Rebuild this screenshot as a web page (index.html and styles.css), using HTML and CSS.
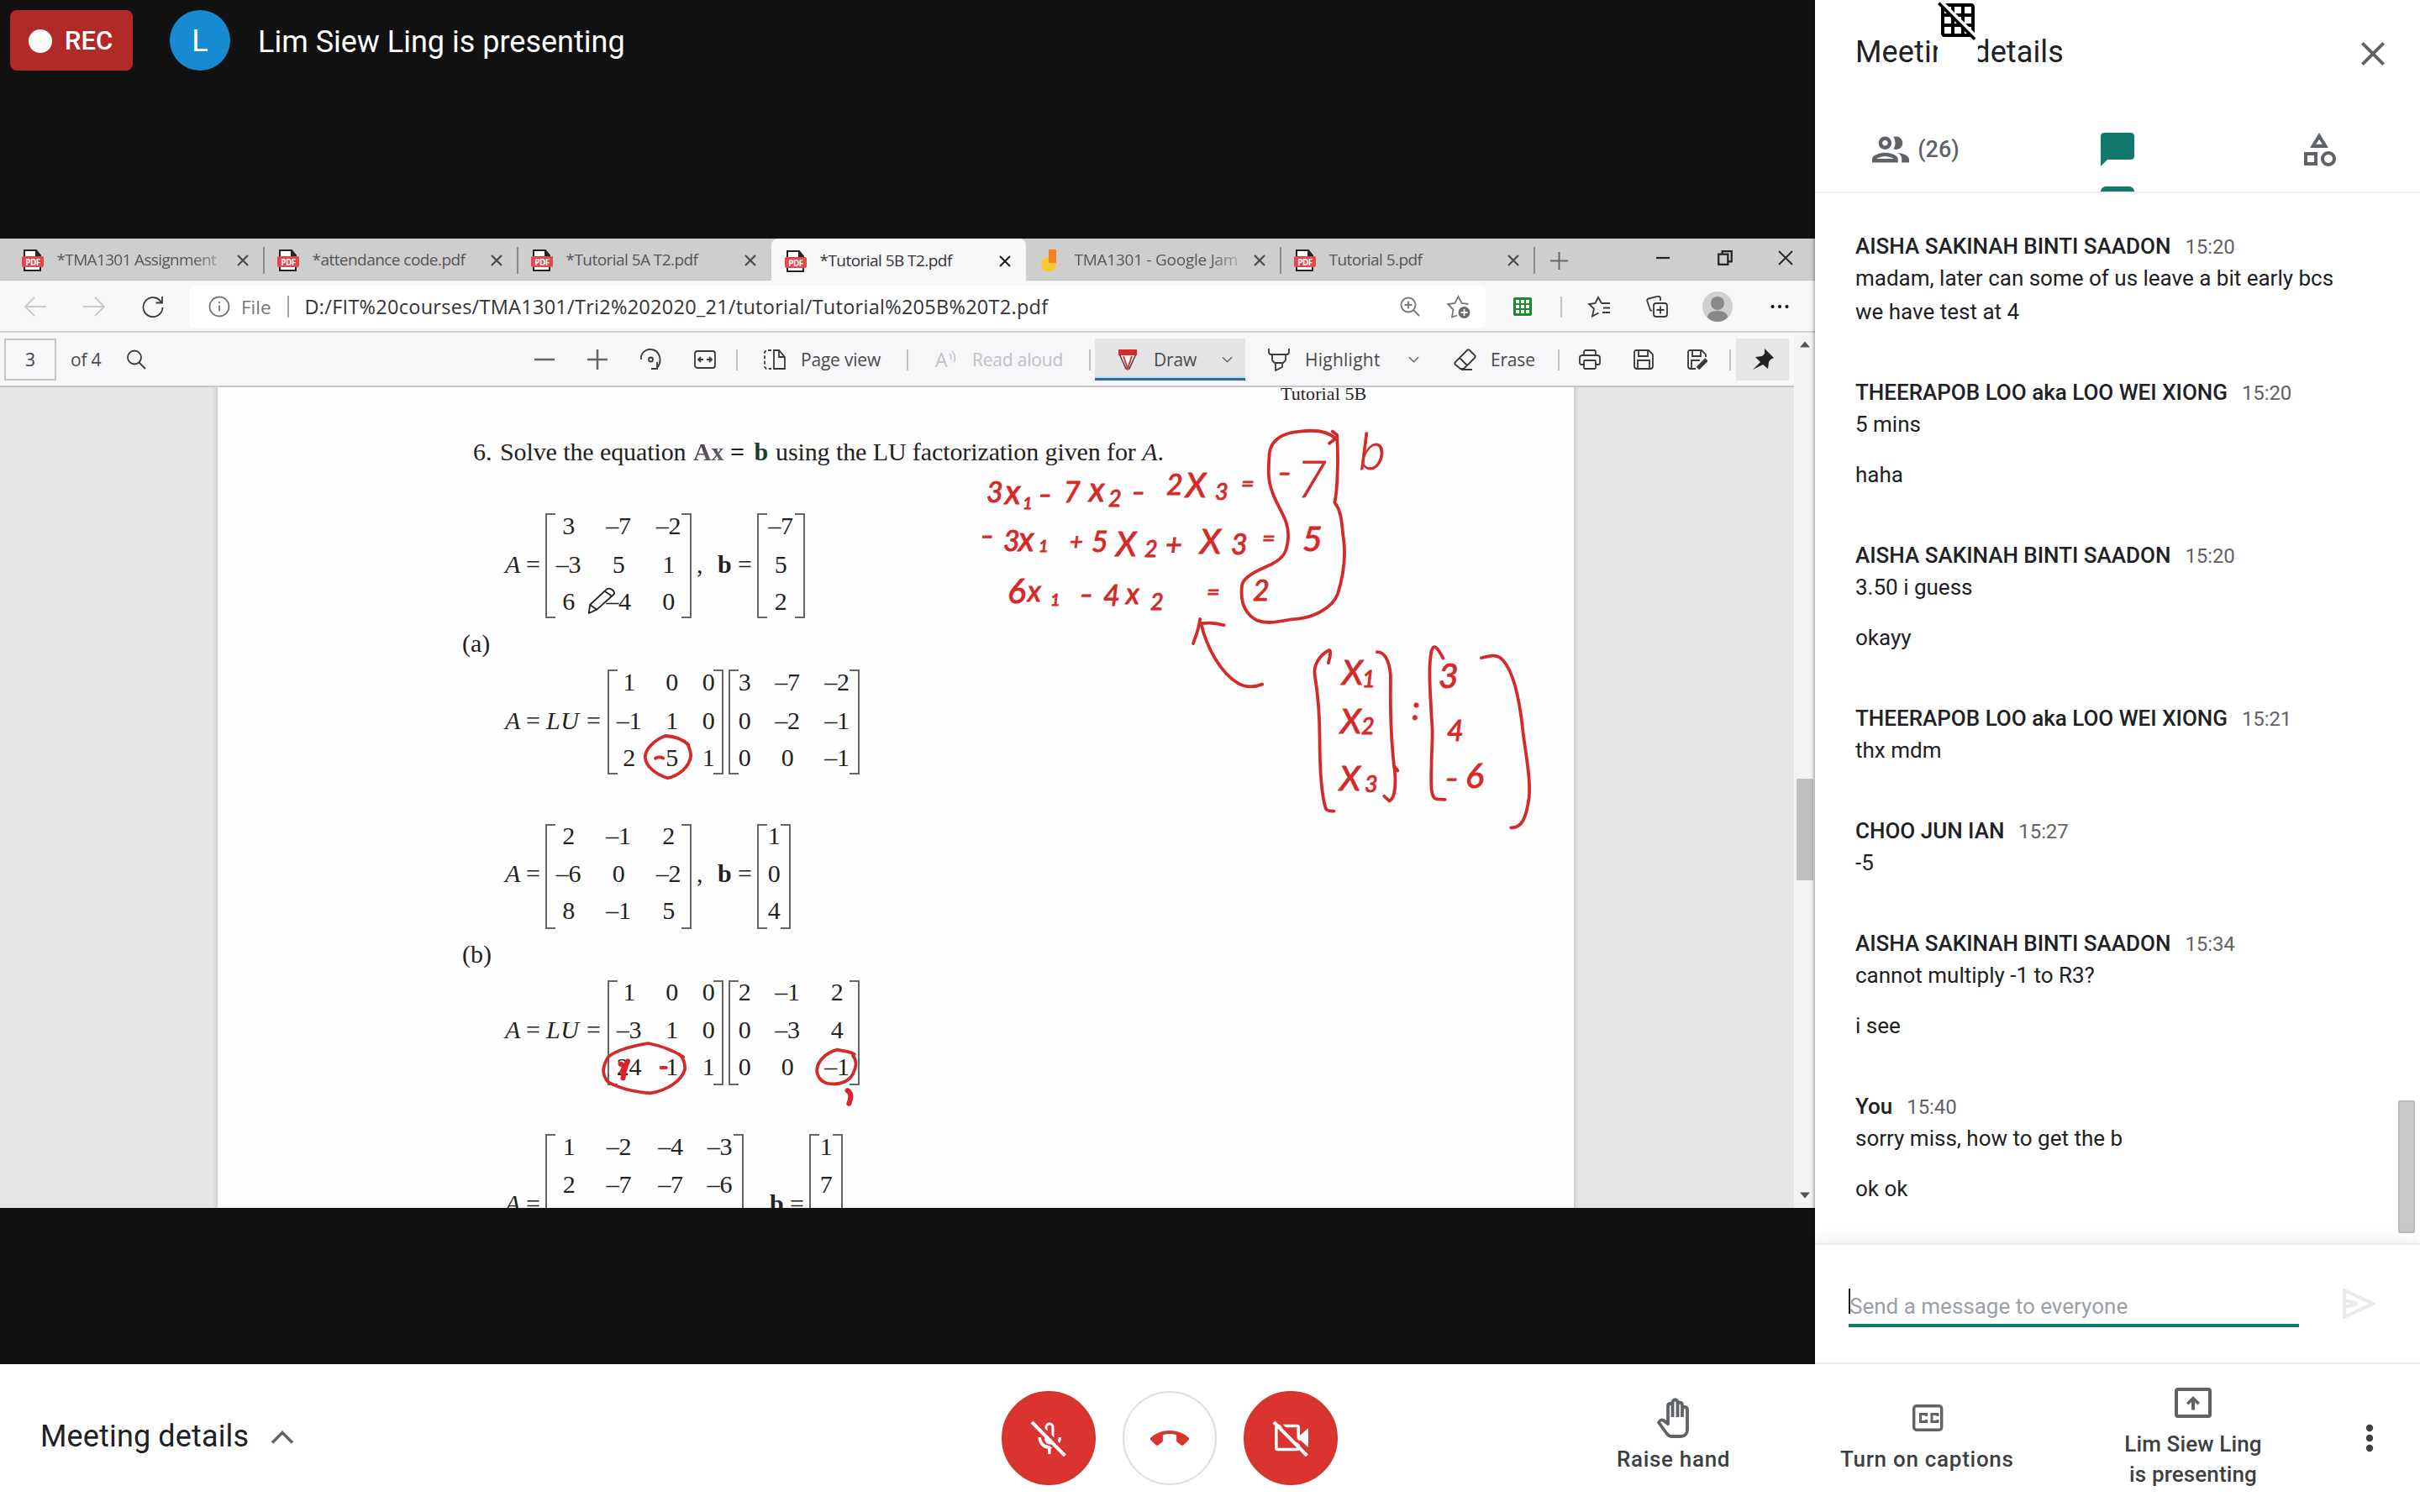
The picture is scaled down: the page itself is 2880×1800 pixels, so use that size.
FILE: index.html
```html
<!DOCTYPE html>
<html lang="en">
<head>
<meta charset="utf-8">
<title>Meeting</title>
<link rel="stylesheet" href="styles.css">
</head>
<body>
<svg class="defs" aria-hidden="true">
  <symbol id="pdf" viewBox="0 0 26 26">
    <path d="M3 1h14l5 6v18H3z" fill="#fff" stroke="#222" stroke-width="2"/>
    <path d="M16 1l6 7h-6z" fill="#222"/>
    <rect x="0" y="8" width="26" height="13" rx="2" fill="#e2474c"/>
    <text x="13" y="18.5" text-anchor="middle" class="pdf-label">PDF</text>
  </symbol>
  <symbol id="x" viewBox="0 0 16 16"><path d="M2 2l12 12M14 2L2 14" fill="none" stroke="currentColor" stroke-width="2.2"/></symbol>
  <symbol id="chev" viewBox="0 0 14 8"><path d="M1 1l6 6 6-6" fill="none" stroke="currentColor" stroke-width="1.6"/></symbol>
</svg>

<div class="app">
  <main class="stage">
    <header class="stage-head">
      <div class="rec"><i></i>REC</div>
      <div class="avatar">L</div>
      <div class="presenter">Lim Siew Ling is presenting</div>
    </header>

    <section class="share">
      <div class="tabs">
        <div class="tab"><svg class="fav"><use href="#pdf"/></svg><span class="fade tight">*TMA1301 Assignment</span><svg class="tx"><use href="#x"/></svg></div>
        <div class="tab"><svg class="fav"><use href="#pdf"/></svg><span>*attendance code.pdf</span><svg class="tx"><use href="#x"/></svg></div>
        <div class="tab last"><svg class="fav"><use href="#pdf"/></svg><span>*Tutorial 5A T2.pdf</span><svg class="tx"><use href="#x"/></svg></div>
        <div class="tab active"><svg class="fav"><use href="#pdf"/></svg><span>*Tutorial 5B T2.pdf</span><svg class="tx"><use href="#x"/></svg></div>
        <div class="tab"><svg class="fav jam" viewBox="0 0 26 26"><path d="M11 9h9v8a9 9 0 1 1-9-8z" fill="#fbc934"/><path d="M11 0h9v16h-9z" fill="#f5821f"/></svg><span class="fade">TMA1301 - Google Jam</span><svg class="tx"><use href="#x"/></svg></div>
        <div class="tab"><svg class="fav"><use href="#pdf"/></svg><span>Tutorial 5.pdf</span><svg class="tx"><use href="#x"/></svg></div>
        <div class="win">
          <svg class="w-plus" viewBox="0 0 22 22"><path d="M11 0v22M0 11h22" stroke="#666" stroke-width="2"/></svg>
          <svg class="w-min" viewBox="0 0 18 18"><path d="M1 9h16" stroke="#222" stroke-width="2.2"/></svg>
          <svg class="w-res" viewBox="0 0 18 18"><path d="M2 5h10v11H2zM6 5V2h10v11h-4" fill="none" stroke="#222" stroke-width="2"/></svg>
          <svg class="w-x" viewBox="0 0 18 18"><path d="M1 1l16 16M17 1L1 17" stroke="#222" stroke-width="1.800"/></svg>
        </div>
      </div>

      <div class="addr">
        <svg class="i26 dim" viewBox="0 0 26 26"><path d="M26 13H1M12 2L1 13l11 11" /></svg>
        <svg class="i26 dim" viewBox="0 0 26 26"><path d="M0 13h25M14 2l11 11-11 11"/></svg>
        <svg class="i26 dark" viewBox="0 0 26 26"><path d="M23 8A11.5 11.5 0 1 0 24.5 14M24 1v7.500h-7.500"/></svg>
        <div class="omni">
          <svg class="i26 grey" viewBox="0 0 26 26"><circle cx="13" cy="13" r="11.500"/><path d="M13 11.500v7M13 7v2"/></svg>
          <span class="file">File</span>
          <i></i>
          <span class="url">D:/FIT%20courses/TMA1301/Tri2%202020_21/tutorial/Tutorial%205B%20T2.pdf</span>
          <svg class="i24 grey" viewBox="0 0 24 24"><circle cx="10" cy="10" r="8.500"/><path d="M16.500 16.500L23 23M10 5.500v9M5.500 10h9"/></svg>
          <svg class="i28 grey" viewBox="0 0 28 28"><path d="M12 24.500l-6 2 1.500-9L1 11l8.500-1L13.500 2l4 8 8 1"/><circle cx="20.500" cy="21" r="7" fill="#6b6b6b" stroke="none"/><path d="M20.500 17v8M16.500 21h8" stroke="#fff"/></svg>
        </div>
        <svg class="i24" viewBox="0 0 24 24"><rect x="1" y="1" width="22" height="22" rx="2" fill="#1f8a2d"/><path d="M4 4h4v4H4zm6 0h4v4h-4zm6 0h4v4h-4zM4 10h4v4H4zm6 0h4v4h-4zm6 0h4v4h-4zM4 16h4v4H4zm6 0h4v4h-4zm6 0h4v4h-4z" fill="#fff"/></svg>
        <i class="sep"></i>
        <svg class="i26 dark" viewBox="0 0 26 26"><path d="M16 9l-4-7-3.500 7L1 10l6 5.500-2 9 7.500-4M16 9h10M18 14.500h8M17 20h9"/></svg>
        <svg class="i26 dark" viewBox="0 0 26 26"><rect x="9" y="9" width="16" height="16" rx="3"/><path d="M17 12.500v9M12.500 17h9M17 6V3c0-2-2-2.500-3.500-2L3 3.500C1 4 1 5 1.500 7L5 17c.5 1 1 1 2 .500"/></svg>
        <svg class="i36" viewBox="0 0 36 36"><circle cx="18" cy="18" r="18" fill="#d2d0cf"/><circle cx="18" cy="14" r="8" fill="#8b8988"/><path d="M6 31c0-5 5-8 12-8s12 3 12 8c-3 3-7 5-12 5s-9-2-12-5z" fill="#8b8988"/></svg>
        <svg class="i22" viewBox="0 0 22 22"><circle cx="2.500" cy="11" r="2" /><circle cx="11" cy="11" r="2"/><circle cx="19.500" cy="11" r="2"/></svg>
      </div>

      <div class="viewer">
        <div class="view-main">
          <div class="tools">
            <span class="pageno">3</span>
            <span class="t">of 4</span>
            <svg class="i24 dark" viewBox="0 0 24 24"><circle cx="10" cy="9.500" r="8"/><path d="M15.500 15.500L23 23"/></svg>
            <svg class="i24 mid" viewBox="0 0 24 24"><path d="M0 12h24"/></svg>
            <svg class="i24 mid" viewBox="0 0 24 24"><path d="M0 12h24M12 0v24"/></svg>
            <svg class="i26 dark" viewBox="0 0 26 26"><path d="M1 13C0 5 7 0 13 1c10 1 14 13 7 22M20 16v8h-7" /><circle cx="12.500" cy="13" r="2.500"/></svg>
            <svg class="i26 dark" viewBox="0 0 26 26"><rect x="1" y="3" width="24" height="20" rx="3"/><path d="M5 13h6M21 13h-6M8 10l-3 3 3 3M18 10l3 3-3 3"/></svg>
            <i class="sep"></i>
            <svg class="i26 dark" viewBox="0 0 26 26"><path d="M12 2v22h13V10l-7-8zM18 2v8h7"/><path d="M9 2H3L1 4v18l2 2h6" stroke-dasharray="4 2.500"/></svg>
            <span class="t">Page view</span>
            <i class="sep"></i>
            <span class="aloud">A<svg viewBox="0 0 10 16"><path d="M1 4c2 2 2 4 2 7M4 1c4 4 4 8 3 13"/></svg></span>
            <span class="t off">Read aloud</span>
            <i class="sep"></i>
            <div class="draw">
              <svg class="i26" viewBox="0 0 26 26"><path d="M3 6h20l-8 18h-4z" fill="#fff" stroke="#444" stroke-width="1.600"/><path d="M2 1h22v7H2z" fill="#d92a2a"/><path d="M8 9l5 15 5-15" fill="none" stroke="#d33" stroke-width="2"/></svg>
              <span class="t">Draw</span>
              <svg class="c13"><use href="#chev"/></svg>
            </div>
            <svg class="i28 dark" viewBox="0 0 28 28"><path d="M2 1v4c0 2 1 3 3 3h18c2 0 3-1 3-3V1M6 8v7l3 3h10l3-3V8M10 18v9l8-4v-5"/></svg>
            <span class="t wide">Highlight</span>
            <svg class="c13"><use href="#chev"/></svg>
            <svg class="i28 dark" viewBox="0 0 28 28"><path d="M2 17L16 3c1-1 2-1 3 0l6 6c1 1 1 2 0 3L12 25H8l-6-5c-1-1-1-2 0-3zM7 12l9 9M9 26h13"/></svg>
            <span class="t">Erase</span>
            <i class="sep"></i>
            <svg class="i26 dark" viewBox="0 0 26 26"><path d="M6 8V4c0-1 1-2 2-2h10c1 0 2 1 2 2v4M6 19H3c-1 0-2-1-2-2v-6c0-2 1-3 3-3h18c2 0 3 1 3 3v6c0 1-1 2-2 2h-3"/><rect x="6" y="14" width="14" height="10" rx="1.500"/></svg>
            <svg class="i24 dark" viewBox="0 0 24 24"><path d="M3 1h15l5 5v14c0 2-1 3-3 3H4c-2 0-3-1-3-3V3c0-1 1-2 2-2zM6 1v7h11V1M5 23V13h14v10"/></svg>
            <svg class="i24 dark" viewBox="0 0 24 24"><path d="M10 23H4c-2 0-3-1-3-3V3c0-1 1-2 2-2h14l5 5v3M6 1v7h10V1M5 23V13h10"/><path d="M23 12L12.500 22.500" stroke-width="5"/></svg>
            <i class="sep"></i>
            <div class="pin"><svg class="i26" viewBox="0 0 26 26"><path d="M15 0l11 11-4 2-2 3-1 8-6-5-12 6 9-9-6-6 8-1 3-3z" fill="#222"/></svg></div>
          </div>

          <div class="canvas">
            <article class="page">
              <div class="running">Tutorial 5B</div>
              <div class="question"><span>6.</span><span>Solve the equation</span><b class="smear">Ax</b><b>=</b><b class="bb">b</b><span>using the LU factorization given for <em>A</em>.</span></div>

              <div class="eq">
                <div class="lhs"><em>A</em><span>=</span></div>
                <div class="mx a3"><span>3</span><span>–7</span><span>–2</span><span>–3</span><span>5</span><span>1</span><span>6</span><span>–4</span><span>0</span></div>
                <div class="vecl"><span>,</span><b>b</b><span>=</span></div>
                <div class="mx v1"><span>–7</span><span>5</span><span>2</span></div>
              </div>
              <div class="part">(a)</div>
              <div class="eq">
                <div class="lhs lu"><em>A</em><span>=</span><em>LU</em><span>=</span></div>
                <div class="mx l3"><span>1</span><span>0</span><span>0</span><span>–1</span><span>1</span><span>0</span><span>2</span><span>5</span><span>1</span></div>
                <div class="mx u3"><span>3</span><span>–7</span><span>–2</span><span>0</span><span>–2</span><span>–1</span><span>0</span><span>0</span><span>–1</span></div>
              </div>

              <div class="eq gap low">
                <div class="lhs"><em>A</em><span>=</span></div>
                <div class="mx a3"><span>2</span><span>–1</span><span>2</span><span>–6</span><span>0</span><span>–2</span><span>8</span><span>–1</span><span>5</span></div>
                <div class="vecl"><span>,</span><b>b</b><span>=</span></div>
                <div class="mx v2"><span>1</span><span>0</span><span>4</span></div>
              </div>
              <div class="part">(b)</div>
              <div class="eq low">
                <div class="lhs lu"><em>A</em><span>=</span><em>LU</em><span>=</span></div>
                <div class="mx l3"><span>1</span><span>0</span><span>0</span><span>–3</span><span>1</span><span>0</span><span>24</span><span>1</span><span>1</span></div>
                <div class="mx u3"><span>2</span><span>–1</span><span>2</span><span>0</span><span>–3</span><span>4</span><span>0</span><span>0</span><span>–1</span></div>
              </div>

              <div class="eq gap tall">
                <div class="lhs"><em>A</em><span>=</span></div>
                <div class="mx a4"><span>1</span><span>–2</span><span>–4</span><span>–3</span><span>2</span><span>–7</span><span>–7</span><span>–6</span></div>
                <div class="vecl"><span></span><b>b</b><span>=</span></div>
                <div class="mx v3"><span>1</span><span>7</span></div>
              </div>
            </article>

            <svg class="ink" viewBox="0 461 2135 977">
              <g class="pen">
                <text><tspan x="1174" y="598">3</tspan><tspan x="1196" y="600" class="c">x</tspan><tspan class="s" x="1217" y="606">1</tspan><tspan x="1236" y="598" class="d">–</tspan><tspan x="1266" y="598">7</tspan><tspan x="1296" y="597" class="c">x</tspan><tspan class="m" x="1319" y="603">2</tspan><tspan x="1347" y="595" class="d">–</tspan><tspan x="1388" y="589">2</tspan><tspan x="1411" y="592" class="c">X</tspan><tspan class="m" x="1446" y="595">3</tspan><tspan class="m" x="1477" y="585">=</tspan><tspan x="1521" y="572" class="d">–</tspan><tspan class="xl" x="1543" y="592">7</tspan><tspan class="xl" x="1617" y="559">b</tspan></text>
                <text><tspan x="1167" y="647" class="d">–</tspan><tspan x="1194" y="656">3</tspan><tspan x="1212" y="656" class="c">x</tspan><tspan class="s" x="1236" y="657">1</tspan><tspan x="1273" y="654" class="m">+</tspan><tspan x="1299" y="657">5</tspan><tspan class="c" x="1328" y="662">X</tspan><tspan class="m" x="1362" y="663">2</tspan><tspan x="1387" y="661">+</tspan><tspan class="c l" x="1428" y="659">X</tspan><tspan x="1465" y="660">3</tspan><tspan class="m" x="1502" y="650">=</tspan><tspan class="l" x="1550" y="656">5</tspan></text>
                <text><tspan class="l" x="1199" y="718">6</tspan><tspan x="1223" y="716">x</tspan><tspan class="s" x="1250" y="721">1</tspan><tspan x="1285" y="717" class="d">–</tspan><tspan x="1313" y="721">4</tspan><tspan x="1340" y="719">x</tspan><tspan class="m" x="1369" y="726">2</tspan><tspan class="m" x="1436" y="714">=</tspan><tspan x="1491" y="715">2</tspan></text>
                <text><tspan class="c l" x="1597" y="815">X</tspan><tspan class="m" x="1621" y="818">1</tspan><tspan class="c l" x="1595" y="873">X</tspan><tspan class="m" x="1620" y="874">2</tspan><tspan class="c l" x="1594" y="941">X</tspan><tspan class="m" x="1624" y="943">3</tspan></text>
                <text><tspan x="1680" y="857" class="c">:</tspan><tspan class="l" x="1712" y="819">3</tspan><tspan x="1722" y="882">4</tspan><tspan x="1720" y="936" class="d">–</tspan><tspan class="l" x="1744" y="938">6</tspan></text>
              </g>
              <g transform="translate(1150 450) scale(.44643 .35714)">
                <path d="M968 218l16-16C965 178 930 172 890 178 840 182 812 210 808 250 806 300 800 340 822 400 840 450 860 480 858 530 856 580 845 600 815 620 780 640 740 660 735 690 730 740 740 785 775 808 820 825 840 805 880 803 920 800 975 770 990 720 1005 660 1012 600 1006 540 1000 490 1003 450 982 415 990 370 992 260 988 190L976 178"/>
                <path d="M605 885C612 855 620 840 623 803M687 824C665 815 645 815 626 818 640 900 680 985 725 1018 745 1032 770 1030 789 1021"/>
                <path d="M965 950C972 920 972 905 966 908 940 925 925 960 929 990 938 1060 942 1120 942 1200 942 1300 945 1380 958 1435 962 1445 970 1443 980 1444"/>
                <path d="M1095 913C1120 912 1132 960 1131 1010 1130 1100 1132 1200 1140 1290 1146 1340 1145 1400 1128 1410L1114 1394M1140 1293l10 16"/>
                <path d="M1271 934C1255 895 1246 885 1240 910 1230 970 1238 1060 1240 1130 1246 1200 1240 1220 1240 1290 1238 1360 1238 1405 1255 1404L1276 1405"/>
                <path d="M1373 933C1400 924 1415 920 1430 940 1460 980 1475 1070 1484 1180 1492 1260 1505 1340 1500 1400 1492 1470 1480 1500 1452 1499"/>
              </g>
              <g transform="translate(540 460) scale(.35714 .33333)">
                <path d="M782 1280C765 1262 740 1250 705 1248 670 1262 637 1295 638 1325 640 1360 675 1385 712 1399 750 1390 785 1360 790 1320 790 1300 785 1290 778 1275M672 1328c10-5 18-5 26 0" />
                <path class="pencil" d="M450 810l4-30 55-55c8-8 28 2 26 16l-58 56zM454 780l23 17M503 731l24 18"/>
              </g>
              <g transform="translate(540 950) scale(.35714 .33333)">
                <path d="M765 925C730 900 690 885 648 876 600 885 540 900 515 925 492 965 495 990 515 1015 550 1035 600 1050 655 1054 710 1045 760 1010 770 970 772 945 765 930 752 915M690 963h18"/>
                <path d="M1335 915C1320 905 1300 905 1278 899 1240 910 1210 940 1210 975 1215 1010 1235 1020 1260 1021 1290 1024 1320 1010 1330 985 1342 960 1345 940 1330 920"/>
                <path class="fat" d="M1312 1045c12 6 14 25 5 46M580 940c-10 20-14 40-16 60M556 950l14 8-8 18"/>
              </g>
            </svg>
          </div>
        </div>
        <div class="vscroll"><svg viewBox="0 0 14 8"><path d="M7 0l7 8H0z"/></svg><i></i><svg viewBox="0 0 14 8"><path d="M7 8l7-8H0z"/></svg></div>
      </div>
    </section>
  </main>

  <aside class="side">
    <div class="side-head">
      <h2>Meeting details</h2>
      <svg viewBox="0 0 24 24"><path d="M19 6.410L17.590 5 12 10.590 6.410 5 5 6.410 10.590 12 5 17.590 6.410 19 12 13.410 17.590 19 19 17.590 13.410 12z"/></svg>
      <div class="gridoff"><svg viewBox="0 0 24 24"><path d="M8 4v1.450l2 2V4h4v4h-3.450l2 2H14v1.450l2 2V10h4v4h-3.450l2 2H20v1.450l2 2V4c0-1.100-.9-2-2-2H4.550l2 2H8zm8 0h4v4h-4V4zM1.270 1.270L0 2.550l2 2V20c0 1.100.9 2 2 2h15.460l2 2 1.270-1.270L1.270 1.270zM10 12.550L11.450 14H10v-1.450zm-6-6L5.450 8H4V6.550zM8 20H4v-4h4v4zm0-6H4v-4h3.450l.55.550V14zm6 6h-4v-4h3.450l.55.540V20zm2 0v-1.460L17.460 20H16z"/></svg></div>
    </div>
    <nav class="side-tabs">
      <div><svg viewBox="0 0 24 24"><path d="M9 13.750c-2.340 0-7 1.170-7 3.500V19h14v-1.750c0-2.330-4.660-3.500-7-3.500zM4.340 17c.84-.58 2.870-1.250 4.660-1.250s3.820.67 4.660 1.250H4.340zM9 12c1.930 0 3.500-1.570 3.500-3.500S10.930 5 9 5 5.500 6.570 5.500 8.500 7.070 12 9 12zm0-5c.83 0 1.500.67 1.500 1.500S9.830 10 9 10s-1.500-.67-1.500-1.500S8.170 7 9 7zm7.040 6.810c1.160.84 1.960 1.960 1.960 3.440V19h4v-1.750c0-2.020-3.500-3.170-5.960-3.440zM15 12c1.930 0 3.500-1.570 3.500-3.500S16.930 5 15 5c-.54 0-1.040.13-1.500.350.63.89 1 1.980 1 3.150s-.37 2.260-1 3.150c.46.220.96.350 1.500.350z" transform="translate(-1.200 -1.200) scale(1.100)"/></svg><span>(26)</span></div>
      <div class="on"><svg viewBox="0 0 24 24"><path d="M20 2H4c-1.100 0-2 .9-2 2v18l4-4h14c1.100 0 2-.9 2-2V4c0-1.100-.9-2-2-2z"/></svg></div>
      <div><svg viewBox="0 0 24 24"><path d="M12 2l-5.500 9h11L12 2zm0 3.840L13.930 9h-3.870L12 5.840zM17.500 13c-2.490 0-4.500 2.010-4.500 4.500s2.010 4.500 4.500 4.500 4.500-2.010 4.500-4.500-2.010-4.500-4.500-4.500zm0 7c-1.380 0-2.500-1.120-2.500-2.500s1.120-2.500 2.500-2.500 2.500 1.120 2.500 2.500-1.120 2.500-2.500 2.500zM3 21.500h8v-8H3v8zm2-6h4v4H5v-4z"/></svg></div>
    </nav>
    <div class="chat">
      <div class="msg"><h3>AISHA SAKINAH BINTI SAADON<time>15:20</time></h3><p>madam, later can some of us leave a bit early bcs<br>we have test at 4</p></div>
      <div class="msg"><h3>THEERAPOB LOO aka LOO WEI XIONG<time>15:20</time></h3><p>5 mins</p><p>haha</p></div>
      <div class="msg"><h3>AISHA SAKINAH BINTI SAADON<time>15:20</time></h3><p>3.50 i guess</p><p>okayy</p></div>
      <div class="msg"><h3>THEERAPOB LOO aka LOO WEI XIONG<time>15:21</time></h3><p>thx mdm</p></div>
      <div class="msg"><h3>CHOO JUN IAN<time>15:27</time></h3><p>-5</p></div>
      <div class="msg"><h3>AISHA SAKINAH BINTI SAADON<time>15:34</time></h3><p>cannot multiply -1 to R3?</p><p>i see</p></div>
      <div class="msg"><h3>You<time>15:40</time></h3><p>sorry miss, how to get the b</p><p>ok ok</p></div>
      <i class="thumb"></i>
    </div>
    <div class="compose">
      <div class="field"><i></i><span>Send a message to everyone</span></div>
      <svg viewBox="0 0 40 36"><path d="M2 2v32l34-16zM2 14l16 4-16 4" fill="none" stroke="#e8eaed" stroke-width="4"/></svg>
    </div>
  </aside>

  <footer class="bar">
    <div class="details">Meeting details<svg viewBox="0 0 28 18"><path d="M2 15.500L14 3.500l12 12" fill="none" stroke="#5f6368" stroke-width="3.500"/></svg></div>
    <div class="calls">
      <div class="btn red"><svg viewBox="0 0 44 44"><path d="M17.500 9a5.500 5.500 0 0 1 11 0v12l-3 3V9a2.500 2.500 0 0 0-5 0v6l-3-3zM9.500 21H13c0 6 5 10 10 10l3.500 3-2 .700V41h-3.500v-6.300C14 34 9.500 28 9.500 21zM17 20l9 9c-5 2-9-2-9-7zM33.500 21H37c0 3-1 6-2.500 8l-2.200-2.200C33 25 33.500 23 33.500 21z"/><path class="cut" d="M6 1l38 38"/><path class="slash" d="M2 3l39.500 40"/></svg></div>
      <div class="btn"><svg viewBox="0 0 48 48"><path d="M24 15c-8.500 0-16.500 3-22.500 8.500-.8.800-.8 2 0 2.800l6 6c.7.700 1.800.7 2.600.100l5-3.600c.5-.4.800-1 .8-1.600v-7c5.200-1.500 11-1.500 16.200 0v7c0 .6.300 1.200.8 1.600l5 3.600c.8.600 1.900.6 2.600-.100l6-6c.8-.8.800-2 0-2.800C40.500 18 32.500 15 24 15z" fill="#d93430"/></svg></div>
      <div class="btn red"><svg viewBox="0 0 44 44"><rect x="4.800" y="7.500" width="26.500" height="28" rx="2" fill="none" stroke="#fff" stroke-width="3.600"/><path d="M33 19l10-9v23l-10-9z"/><path class="cut" d="M6 1l38 38"/><path class="slash" d="M2 3l39.500 40"/></svg></div>
    </div>
    <div class="act raise"><svg viewBox="0 0 42 48"><path d="M14 27V10c0-4 5.500-4 5.500 0V6c0-5 6-5 6 0v3c0-4.500 5.500-4.500 5.500 0v5c0-4 6-4 6 0v24c0 5-3 8-8 8H19c-3 0-5-1-6.500-3.500L3 29.500c1.500-3.500 4.500-3.800 6.500-2L14 31zM19.500 10v13M25.500 8v15M31 10v13" fill="none" stroke="#5f6368" stroke-width="3.800" stroke-linejoin="round"/></svg><span>Raise hand</span></div>
    <div class="act cc"><svg viewBox="0 0 44 32"><rect x="5.700" y="1.700" width="33" height="28.500" rx="3" fill="none" stroke="#5f6368" stroke-width="3.400"/><path d="M20.500 14v-2.500h-7v9h7V18M34 14v-2.500h-7v9h7V18" fill="none" stroke="#5f6368" stroke-width="3"/></svg><span>Turn on captions</span></div>
    <div class="act pres"><svg viewBox="0 0 44 36"><rect x="2" y="2" width="40" height="32" rx="2" fill="none" stroke="#5f6368" stroke-width="4"/><path d="M22 10l8 8-2.500 2.500L24 17v9.500h-4V17l-3.500 3.500L14 18z" fill="#5f6368"/></svg><span>Lim Siew Ling<br>is presenting</span></div>
    <svg class="dots" viewBox="0 0 10 34"><circle cx="5" cy="5" r="4.200"/><circle cx="5" cy="17" r="4.200"/><circle cx="5" cy="29" r="4.200"/></svg>
  </footer>
</div>
</body>
</html>
```
FILE: styles.css
```css
* { box-sizing: border-box; }
body { margin: 0; background: #fff; font-family: Roboto, sans-serif; color: #202124; }
svg { display: block; flex: none; }
.defs { position: absolute; width: 0; height: 0; }
.pdf-label { font: 700 10px "Open Sans", sans-serif; fill: #fff; }

.app { width: 2880px; height: 1800px; display: grid; grid-template: 1624px 176px / 2160px 720px; overflow: hidden; }
.stage { background: #111; display: flex; flex-direction: column; min-width: 0; }

.stage-head { height: 284px; padding: 12px; display: flex; align-items: flex-start; color: #fff; }
.rec { width: 146px; height: 72px; border-radius: 8px; background: #b02b28; display: flex; align-items: center; padding-left: 22px; gap: 15px; font-size: 31px; font-weight: 500; padding-top: 1px; }
.rec i { width: 28px; height: 28px; border-radius: 50%; background: #fff; }
.avatar { margin-left: 44px; width: 72px; height: 72px; border-radius: 50%; background: #168bd1; font-size: 36px; line-height: 74px; text-align: center; }
.presenter { margin-left: 33px; font-size: 36px; line-height: 77px; }

/* shared browser window */
.share { height: 1154px; display: flex; flex-direction: column; font-family: "Open Sans", sans-serif; background: #f7f6f9; }
.tabs { height: 50px; display: grid; grid-template-columns: 302px 302px 302px 303px 303px 302px 1fr; padding-left: 12px; background: #cfcecf; border-bottom: 1px solid #c4c3c4; }
.tab { position: relative; display: grid; grid-template-columns: 41.500px 1fr 16px; align-items: center; padding: 3px 17px 0 16px; font-size: 19px; letter-spacing: -.55px; color: #555; white-space: nowrap; }
.tab:first-child { padding-left: 14px; }
.tab span { line-height: 30px; padding-bottom: 2px; }
.tab .fade { -webkit-mask-image: linear-gradient(90deg, #000 80%, transparent 105%); mask-image: linear-gradient(90deg, #000 80%, transparent 105%); margin-right: 12px; letter-spacing: -.25px; }
.tab .fade.tight { letter-spacing: -.65px; }
.tab::after { content: ""; position: absolute; right: -1px; top: 10px; width: 2px; height: 32px; background: #8b8a8b; }
.tab.last::after, .tab.active::after { display: none; }
.tab.active { background: #f8f7fa; border-radius: 8px 8px 0 0; margin-bottom: -1px; color: #333; }
.fav { width: 26px; height: 26px; }
.tx { width: 16px; height: 16px; color: #4a4a4a; }
.active .tx { color: #222; }
.win { display: grid; grid-template-columns: 125px 73px 73px 18px; padding: 0 0 4px 19px; align-items: center; }
.w-plus { width: 21px; height: 21px; margin-top: 7px; }
.w-min, .w-x { width: 18px; height: 18px; }
.w-res { width: 20px; height: 20px; }

.addr { height: 62px; display: grid; grid-template-columns: 70px 70px 55.500px 1575.500px 56.500px 33.500px 69px 67px 81px 22px; padding: 2px 0 0 29px; align-items: center; border-bottom: 2px solid #cfced1; }
.i22 { width: 22px; height: 22px; }
.i24 { width: 24px; height: 24px; }
.i26 { width: 26px; height: 26px; }
.i28 { width: 28px; height: 28px; }
.i36 { width: 36px; height: 36px; }
.dim, .dark, .grey, .mid { fill: none; stroke-width: 1.800; }
.dim { stroke: #c9c8cb; }
.dark { stroke: #3a3a3a; }
.grey { stroke: #777; }
.mid { stroke: #666; stroke-width: 2.500; }
.omni { width: 1543px; height: 50px; background: #fff; border-radius: 5px; display: grid; grid-template-columns: 39px 55px 20.500px 1303.500px 56px 28px; padding-left: 23.500px; align-items: center; }
.omni i { width: 2px; height: 26px; background: #a5a5a5; }
.file { font-size: 22.500px; color: #777; }
.url { font-size: 23.500px; letter-spacing: .27px; color: #333; white-space: nowrap; }
.sep { width: 2px; height: 25px; background: #c2c1c4; }

.viewer { flex: 1; display: grid; grid-template-columns: 2135px 25px; min-height: 0; }
.view-main { display: flex; flex-direction: column; min-height: 0; }
.tools { height: 65px; flex: none; padding: 1px 0 0 5px; display: grid; align-items: center; justify-items: start; border-bottom: 2px solid #c6c5c8;
  grid-template-columns: 79px 66px 486px 63px 63px 64px 50px 33px 44px 126px 34px 44px 139px 7px 204.500px 45.500px 123px 54px 44px 80px 25px 65px 64px 50px 8px 63px; }
.t { font-size: 21px; letter-spacing: -.2px; color: #4a4a4a; white-space: nowrap; }
.t.wide { letter-spacing: .25px; }
.t.off { color: #c1c0c3; }
.pageno { width: 62px; height: 50px; border: 2px solid #c3c2c5; line-height: 46px; text-align: center; font-size: 21px; color: #444; }
.aloud { position: relative; font-size: 23px; color: #c1c0c3; }
.aloud svg { position: absolute; left: 16px; top: 5px; width: 10px; height: 16px; fill: none; stroke: #c1c0c3; stroke-width: 1.500; }
.draw { width: 179px; height: 50px; background: #e4e3e5; border-bottom: 3px solid #2b6ea5; box-shadow: inset 0 -2px #bfe0f5; display: grid; grid-template-columns: 44px 81px 13px; align-items: center; padding: 3px 0 0 26px; }
.c13 { width: 13px; height: 8px; color: #666; }
.pin { width: 63px; height: 50px; background: #e6e5e7; display: grid; place-items: center; }

.canvas { position: relative; flex: 1; min-height: 0; overflow: hidden; background: #e6e6e8; }
.page { margin-left: 259px; width: 1614px; height: 1000px; background: #fefefe; box-shadow: 0 0 5px 2px #c9c9cb; font: 30px "Liberation Serif", serif; color: #222; }
.running { height: 60px; padding-left: 1265px; font-size: 22px; line-height: 16px; letter-spacing: .1px; }
.question { height: 90px; padding-left: 304px; display: grid; grid-template-columns: 32px 230px 44px 28.500px 25.500px 1fr; line-height: 34px; letter-spacing: -.1px; white-space: nowrap; }
.smear { background: linear-gradient(160deg, #3d3140, #86808a 60%, #333); -webkit-background-clip: text; background-clip: text; color: transparent; }
.bb { color: #1c3b33; }
.eq { height: 125px; padding-left: 342px; display: flex; }
.eq.gap { margin-top: 58.500px; }
.part { height: 61px; padding-left: 291px; line-height: 59px; }
.lhs { width: 48px; display: grid; grid-template-columns: 25px 23px; line-height: 121px; }
.lhs.lu { width: 122px; grid-template-columns: 25px 24px 48px 25px; }
.lu em + span + em { letter-spacing: .6px; }
.mx { position: relative; height: 125px; display: grid; grid-template-rows: 30px 62px 26px; align-items: center; justify-items: center; line-height: 34px; letter-spacing: -.3px; }
.low .mx { grid-template-rows: 28px 62px 26px; }
.low .lhs, .low .vecl { line-height: 118px; }
.mx::before, .mx::after { content: ""; position: absolute; top: 0; bottom: 0; width: 10px; border: 2.500px solid #666; }
.mx::before { left: 0; border-right: 0; }
.mx::after { right: 0; border-left: 0; }
.a3 { width: 174px; grid-template-columns: 55px 64px 55px; }
.l3 { width: 138px; margin-right: 6px; grid-template-columns: 51px 51px 36px; }
.u3 { width: 156px; grid-template-columns: 38px 64px 54px; }
.v1 { width: 57px; grid-template-columns: 56px; }
.v2 { width: 40px; grid-template-columns: 40px; }
.v3 { width: 40px; grid-template-columns: 40px; }
.tall .mx, .tall .lhs, .tall .vecl { height: 180px; }
.tall .mx { grid-template-rows: 30px 59px 60px; }
.tall .lhs, .tall .vecl { line-height: 165px; }
.a4 { width: 236px; grid-template-columns: 56px 63px 60px 57px; }
.vecl { width: 78px; display: grid; grid-template-columns: 25px 24px 1fr; padding-left: 6px; line-height: 121px; }

.ink { position: absolute; inset: 0; width: 2135px; height: 977px; }
.ink path { fill: none; stroke: #d42a2a; stroke-width: 3.800; vector-effect: non-scaling-stroke; stroke-linecap: round; stroke-linejoin: round; }
.ink .pencil { stroke: #222; stroke-width: 1.800; fill: #fff; }
.ink .fat { stroke-width: 6; stroke: #e0202a; }
.pen { font: italic 34px Lato, sans-serif; fill: #d42a2a; stroke: #d42a2a; stroke-width: 1; }
.pen .s { font-size: 20px; }
.pen .m { font-size: 27px; }
.pen .d { font-size: 27px; stroke-width: 1.500; }
.pen .c { font-size: 40px; }
.pen .l { font-size: 41px; }
.pen .xl { font-size: 62px; stroke-width: .800; font-weight: 300; }

.vscroll { background: #f3f2f4; display: grid; grid-template-rows: 10px 1fr 10px; justify-items: center; padding: 10px 0 9px; fill: #555; }
.vscroll svg { width: 12px; height: 8px; }
.vscroll i { width: 20px; height: 121px; margin-top: 511px; background: #c1c0c1; }

/* chat panel */
.side { position: relative; background: #fff; display: flex; flex-direction: column; box-shadow: -1px 0 4px rgba(0,0,0,.4); }
.side-head { position: relative; height: 126px; padding: 38px 32px 0 48px; display: flex; justify-content: space-between; }
.side-head h2 { margin: 0; font-size: 36px; font-weight: 400; line-height: 49px; letter-spacing: .13px; }
.side-head > svg { width: 48px; height: 48px; margin: 2px 0 0; fill: #5f6368; }
.gridoff { position: absolute; left: 146px; top: 0; width: 48px; height: 90px; background: #fff; }
.gridoff svg { width: 48px; height: 48px; }
.side-tabs { height: 104px; display: grid; grid-template-columns: 1fr 1fr 1fr; border-bottom: 2px solid #f0f0f1; color: #5f6368; fill: #5f6368; }
.side-tabs div { position: relative; display: flex; align-items: center; justify-content: center; font-size: 27px; font-weight: 500; gap: 8px; padding-top: 2px; }
.side-tabs div:first-child { padding-right: 2px; }
.side-tabs svg { width: 48px; height: 48px; }
.side-tabs .on { fill: #11796b; }
.on::after { content: ""; position: absolute; bottom: 0; width: 40px; height: 6px; border-radius: 6px 6px 0 0; background: #11796b; }
.chat { position: relative; flex: 1; padding: 44px 48px 0; overflow: hidden; }
.msg { margin-bottom: 57px; }
.msg h3 { margin: 0; font-size: 26px; font-weight: 500; line-height: 38px; height: 37px; }
.msg time { margin-left: 17px; font-size: 24px; font-weight: 400; color: #5f6368; letter-spacing: -.1px; }
.msg p { margin: 0; font-size: 26px; line-height: 40px; }
.msg p + p { margin-top: 20px; }
.thumb { position: absolute; right: 6px; top: 1080px; width: 20px; height: 158px; background: #c9c9c9; border: 2px solid #bababa; border-radius: 2px; }
.compose { height: 144px; border-top: 2px solid #ececec; border-bottom: 2px solid #ececec; box-shadow: 0 -4px 16px rgba(0,0,0,.07); display: flex; padding: 52px 52px 0 40px; justify-content: space-between; background: #fff; position: relative; }
.field { width: 536px; height: 46px; border-bottom: 4px solid #11796b; display: flex; font-size: 26px; line-height: 43px; color: #9aa0a6; }
.field i { width: 2px; height: 30px; background: #202124; }
.field span { margin-left: -1px; }
.compose svg { width: 40px; height: 36px; }

/* call controls */
.bar { grid-column: 1 / 3; background: #fff; display: grid; grid-template-columns: 1192px 732px 266px 338px 287px 10px; position: relative; }
.details { padding-left: 48px; display: flex; font-size: 36px; line-height: 173px; letter-spacing: .15px; }
.details svg { width: 28px; height: 18px; margin: 78px 0 0 26px; }
.calls { display: flex; gap: 32px; padding-top: 32px; }
.btn { width: 112px; height: 112px; border-radius: 50%; border: 2px solid #dedede; display: grid; place-items: center; background: #fff; }
.btn.red { background: #d93430; border-color: #d93430; }
.btn svg { width: 44px; height: 44px; fill: #fff; }
.btn:not(.red) svg { width: 48px; height: 48px; }
.slash { stroke: #fff; stroke-width: 4; }
.cut { stroke: #d93430; stroke-width: 3; }
.act { display: flex; flex-direction: column; font-size: 26px; font-weight: 500; color: #3c4043; white-space: nowrap; line-height: 36px; }
.act svg { margin: 0 auto; }
.raise { width: 136px; letter-spacing: .68px; }
.raise svg { width: 42px; height: 48px; margin-top: 40px; }
.raise span { margin-top: 7px; }
.cc { width: 208px; letter-spacing: .72px; }
.cc svg { width: 44px; height: 32px; margin-top: 48px; }
.cc span { margin-top: 15px; }
.pres { width: 164px; text-align: center; letter-spacing: .12px; }
.pres svg { width: 44px; height: 36px; margin: 28px auto 13px; }
.dots { width: 10px; height: 34px; margin-top: 71px; fill: #3c4043; }
```
